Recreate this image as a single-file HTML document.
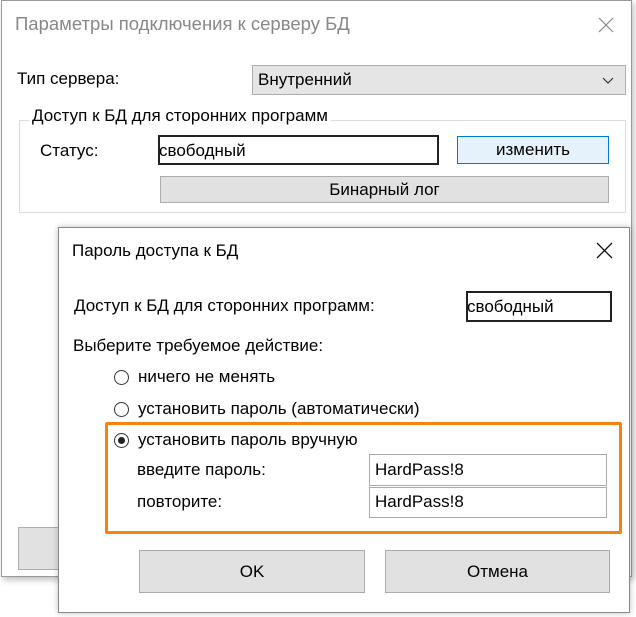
<!DOCTYPE html>
<html><head><meta charset="utf-8"><style>
body{margin:0;width:636px;height:617px;background:#fff;position:relative;overflow:hidden;font-family:"Liberation Sans","DejaVu Sans",sans-serif;font-size:17px;color:#000}
.a{position:absolute;white-space:nowrap}
.btn{position:absolute;background:#e1e1e1;border:1px solid #adadad;box-sizing:border-box;text-align:center}
.tb{position:absolute;background:#fff;box-sizing:border-box;border:1px solid #7a7a7a}
.rad{position:absolute;width:15px;height:15px;border:1px solid #333;border-radius:50%;box-sizing:border-box;background:#fff}
</style></head><body>
<div class="a" style="left:1px;top:0;width:631px;height:577px;border:1px solid #999;box-sizing:border-box;background:#fff;box-shadow:2px 3px 6px rgba(0,0,0,.25)"></div>
<div class="a" style="left:15px;top:13px;font-size:18.5px;color:#888">Параметры подключения к серверу БД</div>
<svg class="a" style="left:598px;top:17px" width="16" height="16"><path d="M1 1L15 15M15 1L1 15" stroke="#888" stroke-width="1.2"/></svg>
<div class="a" style="left:17px;top:69px">Тип сервера:</div>
<div class="a" style="left:252px;top:65px;width:374px;height:30px;background:#e5e5e5;border:1px solid #adadad;box-sizing:border-box"></div>
<div class="a" style="left:258px;top:70px">Внутренний</div>
<svg class="a" style="left:602px;top:77px" width="12" height="8"><path d="M1 1L6 6L11 1" stroke="#333" fill="none" stroke-width="1.2"/></svg>
<div class="a" style="left:19px;top:120px;width:607px;height:93px;border:1px solid #dcdcdc;box-sizing:border-box"></div>
<div class="a" style="left:29px;top:106px;background:#fff;padding:0 3px">Доступ к БД для сторонних программ</div>
<div class="a" style="left:40px;top:141px">Статус:</div>
<div class="tb" style="left:158px;top:135px;width:281px;height:30px;border:2px solid #222"></div>
<div class="a" style="left:159px;top:141px">свободный</div>
<div class="btn" style="left:457px;top:136px;width:152px;height:28px;background:#e5f1fb;border-color:#0078d7;line-height:26px">изменить</div>
<div class="btn" style="left:160px;top:176px;width:449px;height:27px;line-height:25px">Бинарный лог</div>
<div class="btn" style="left:18px;top:527px;width:60px;height:43px"></div>
<div class="a" style="left:58px;top:227px;width:572px;height:386px;border:1px solid #888;box-sizing:border-box;background:#fff;box-shadow:0 0 6px rgba(0,0,0,.25)"></div>
<div class="a" style="left:72px;top:241px">Пароль доступа к БД</div>
<svg class="a" style="left:596px;top:242px" width="17" height="17"><path d="M1 1L16 16M16 1L1 16" stroke="#111" stroke-width="1.3"/></svg>
<div class="a" style="left:74px;top:296px">Доступ к БД для сторонних программ:</div>
<div class="tb" style="left:466px;top:291px;width:146px;height:31px;border:2px solid #222"></div>
<div class="a" style="left:467px;top:297px">свободный</div>
<div class="a" style="left:73px;top:336px">Выберите требуемое действие:</div>
<div class="rad" style="left:114px;top:370px"></div>
<div class="a" style="left:138px;top:367px">ничего не менять</div>
<div class="rad" style="left:114px;top:402px"></div>
<div class="a" style="left:138px;top:399px">установить пароль (автоматически)</div>
<div class="rad" style="left:114px;top:433px"></div>
<div class="a" style="left:118px;top:437px;width:7px;height:7px;border-radius:50%;background:#222"></div>
<div class="a" style="left:138px;top:430px">установить пароль вручную</div>
<div class="a" style="left:105px;top:422px;width:517px;height:112px;border:3px solid #f7820f;box-sizing:border-box;border-radius:2px"></div>
<div class="a" style="left:137px;top:460px">введите пароль:</div>
<div class="a" style="left:137px;top:492px">повторите:</div>
<div class="tb" style="left:369px;top:454px;width:238px;height:32px;border-color:#aaa"></div>
<div class="a" style="left:375px;top:460px">HardPass!8</div>
<div class="tb" style="left:369px;top:487px;width:238px;height:31px;border-color:#aaa"></div>
<div class="a" style="left:375px;top:492px">HardPass!8</div>
<div class="btn" style="left:139px;top:550px;width:226px;height:43px;line-height:41px">OK</div>
<div class="btn" style="left:385px;top:550px;width:225px;height:43px;line-height:41px">Отмена</div>
</body></html>
